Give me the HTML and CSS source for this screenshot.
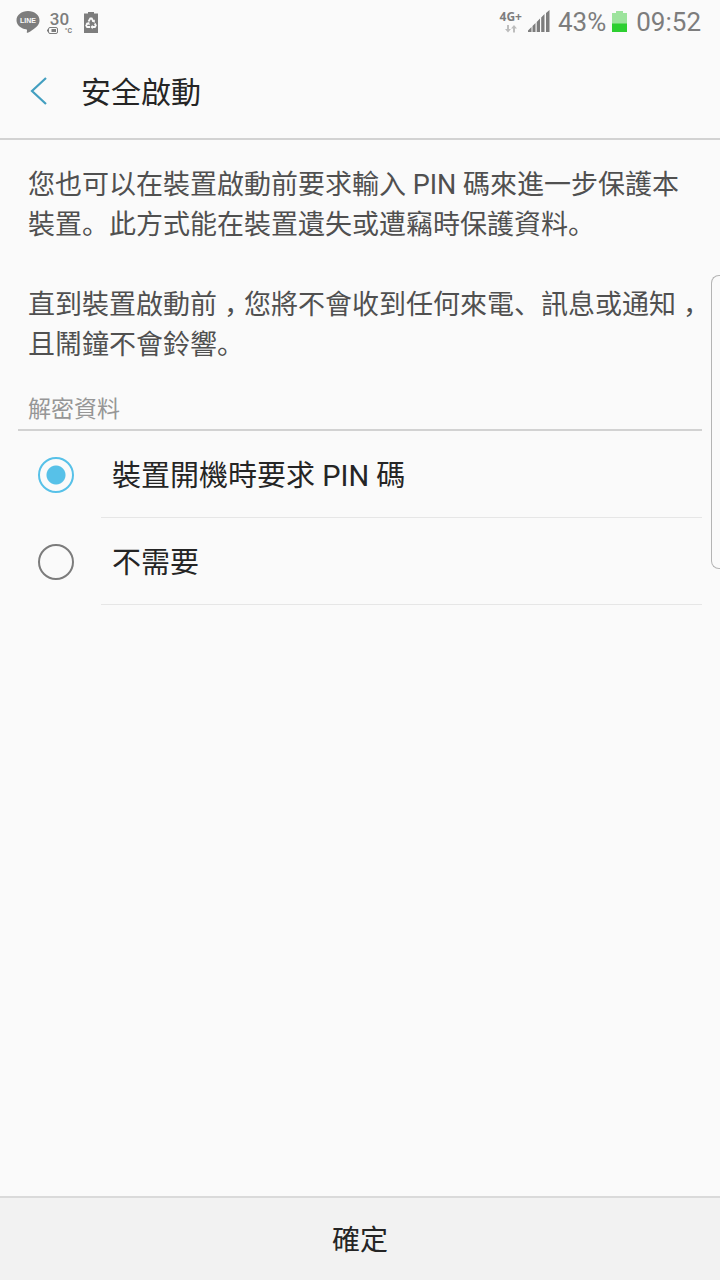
FILE: index.html
```
<!DOCTYPE html>
<html lang="zh-Hans">
<head>
    <meta charset="UTF-8">
    <meta name="viewport" content="width=device-width, initial-scale=1.0">
    <title>安全啟動</title>
    <link rel="stylesheet" href="styles.css">
</head>
<body>
    <div class="status-bar">
        <div class="status-left">
            <svg class="icon-line" width="24" height="24" viewBox="0 0 24 24">
                <path fill="#7d7d7d" d="M12 1C5.600 1 .5 5.100.5 10.200c0 4.600 4.100 8.400 9.600 9.100.8.200 1 .5.900 1.200l-.2 1.800c0 .5.300.7.900.4 3.200-1.500 7.900-4.800 10-7.300 1.300-1.500 1.800-3.200 1.800-5.200C23.500 5.100 18.400 1 12 1z"/>
                <text x="12" y="13" text-anchor="middle" class="line-text">LINE</text>
            </svg>
            <div class="temp">
                <span class="temp-value">30</span>
                <span class="temp-unit">
                    <svg width="11" height="7" viewBox="0 0 11 7">
                        <rect x="1.500" y=".5" width="9" height="6" rx="1.500" fill="none" stroke="#7d7d7d"/>
                        <path d="M0 2.500h1v2H0zM4.500 2h4.500v3H4.500z" fill="#7d7d7d"/>
                    </svg>
                    <span>°C</span>
                </span>
            </div>
            <svg class="icon-recycle" width="14" height="21" viewBox="0 0 14 21">
                <path fill="#7d7d7d" d="M4 0h6v1.500h4V21H0V1.500h4z"/>
                <g fill="none" stroke="#fafafa" stroke-width="1.800">
                    <path d="M4.500 9.500l1.800-3h1.400l1.600 2.700"/>
                    <path d="M10.800 11.500l1 2-.9 1.500H8"/>
                    <path d="M6 15H3.100l-.9-1.500 1.500-2.500"/>
                </g>
                <path fill="#fafafa" d="M10.800 7.500v3.200l-3-1.200zM8.600 12.800v4.400L6.500 15zM1.600 11.200l3.600-1.200.6 3.200z"/>
            </svg>
        </div>
        <div class="status-right">
            <div class="network">
                <span>4G+</span>
                <svg width="12" height="8" viewBox="0 0 12 8">
                    <path fill="#bdbdbd" d="M2 0h2v4h2L3 7.500 0 4h2zM8 7.500h2v-4h2L9 0 6 3.500h2z"/>
                </svg>
            </div>
            <svg class="icon-signal" width="22" height="22" viewBox="0 0 22 22">
                <path fill="#7d7d7d" d="M0 22v-1.500L3.500 17v5zM4.500 22v-6L7.500 13v9zM8.700 22V12L12 8.500V22zM13.200 22V7.500L16.500 4v18zM18 22V3l3.500-3v22z"/>
            </svg>
            <span class="percent">43%</span>
            <svg class="icon-battery" width="15" height="21" viewBox="0 0 15 21">
                <path fill="#9de39d" d="M4 0h7v2h4v19H0V2h4z"/>
                <path fill="#2dcf31" d="M0 12.500h15V21H0z"/>
            </svg>
            <span class="clock">09:52</span>
        </div>
    </div>

    <header>
        <button type="button" class="back-btn" aria-label="返回">
            <svg width="18" height="28" viewBox="0 0 18 28">
                <path d="M16 1L2 14l14 13" fill="none" stroke="#439fc0" stroke-width="2.200"/>
            </svg>
        </button>
        <h1>安全啟動</h1>
    </header>

    <main>
        <div class="description">
            <p>您也可以在裝置啟動前要求輸入 PIN 碼來進一步保護本<br>裝置。此方式能在裝置遺失或遭竊時保護資料。</p>
            <p>直到裝置啟動前<span class="comma">，</span>您將不會收到任何來電、訊息或通知<span class="comma">，</span><br>且鬧鐘不會鈴響。</p>
        </div>

        <form id="pinForm" class="options">
            <h2>解密資料</h2>
            <div class="option">
                <input type="radio" id="requirePin" name="startup" checked>
                <label for="requirePin">裝置開機時要求 PIN 碼</label>
            </div>
            <div class="option">
                <input type="radio" id="noPin" name="startup">
                <label for="noPin">不需要</label>
            </div>
        </form>
    </main>

    <div class="edge-handle"></div>

    <button type="submit" form="pinForm" class="confirm-btn">確定</button>
</body>
</html>
```
FILE: styles.css
```
:root {
    --bg: #fafafa;
    --ink: #252525;
    --text: #505050;
    --muted: #969696;
    --status: #7d7d7d;
    --accent: #57c1e8;
    --line: #d2d2d2;
}

* {
    box-sizing: border-box;
}

body {
    display: flex;
    flex-direction: column;
    min-height: 100vh;
    margin: 0;
    position: relative;
    overflow-x: hidden;
    background-color: var(--bg);
    color: var(--ink);
    font-family: Roboto, "Noto Sans CJK SC", sans-serif;
}

h1, h2, p {
    margin: 0;
    font-weight: normal;
}

button {
    border: none;
    color: inherit;
    font-family: inherit;
    cursor: pointer;
}

/* Status bar */
.status-bar {
    display: flex;
    justify-content: space-between;
    align-items: center;
    height: 44px;
    padding: 0 19px 0 16px;
    color: var(--status);
}

.status-left,
.status-right {
    display: flex;
    align-items: center;
}

.status-left {
    gap: 7px;
}

.line-text {
    fill: #fafafa;
    font: bold 7px "Liberation Sans", sans-serif;
}

.temp {
    display: flex;
    flex-direction: column;
    align-items: center;
    width: 25px;
    padding-top: 2px;
}

.temp-value {
    font-size: 17px;
    font-weight: 500;
    line-height: 15px;
}

.temp-unit {
    display: flex;
    align-items: center;
    justify-content: space-between;
    width: 25px;
    font-size: 7px;
    font-weight: bold;
    line-height: 8px;
}

.icon-recycle {
    margin-left: 5px;
}

.network {
    display: flex;
    flex-direction: column;
    align-items: center;
    gap: 2px;
    margin-right: 6px;
    font-family: "Open Sans", sans-serif;
    font-size: 12px;
    font-weight: bold;
    line-height: 12px;
}

.icon-signal,
.icon-battery {
    margin-bottom: 2px;
}

.percent,
.clock {
    font-size: 26px;
}

.percent {
    margin: 0 6px 0 8px;
}

.clock {
    margin-left: 9px;
}

/* Title */
header {
    display: flex;
    align-items: center;
    height: 96px;
    padding: 0 28px;
    border-bottom: 2px solid var(--line);
}

.back-btn {
    display: flex;
    width: 53px;
    padding: 0 2px;
    background: none;
}

h1 {
    padding-top: 3px;
    font-size: 30px;
    line-height: 40px;
}

/* Content */
main {
    flex: 1;
}

.description {
    display: flex;
    flex-direction: column;
    gap: 40px;
    padding: 25px 0 24px 28px;
    color: var(--text);
    font-size: 27px;
    line-height: 40px;
    white-space: nowrap;
}

/* full-width comma sits in the middle of its cell */
.comma {
    padding-left: 7px;
    margin-right: -7px;
}

.options {
    padding: 0 18px;
}

h2 {
    padding: 3px 10px 1px;
    border-bottom: 2px solid var(--line);
    color: var(--muted);
    font-size: 23px;
    line-height: 36px;
}

.option {
    display: flex;
    align-items: center;
    height: 87px;
    padding-left: 20px;
}

.option input {
    appearance: none;
    flex: none;
    width: 36px;
    height: 36px;
    margin: 0 27px 0 0;
    border: 2px solid #7c7c7c;
    border-radius: 50%;
}

.option input:checked {
    border-color: var(--accent);
    background: radial-gradient(circle, var(--accent) 9px, transparent 10px);
}

.option label {
    flex: 1;
    height: 87px;
    padding: 4px 0 0 11px;
    border-bottom: 1px solid #e6e6e6;
    font-size: 29px;
    line-height: 83px;
}

/* Edge panel handle, overlaps the right side of the screen */
.edge-handle {
    position: absolute;
    top: 275px;
    right: -2px;
    width: 11px;
    height: 294px;
    border: 1px solid #b4b4b4;
    border-right: none;
    border-radius: 8px 0 0 8px;
}

.confirm-btn {
    height: 84px;
    padding-bottom: 3px;
    border-top: 2px solid #dadada;
    background-color: #f2f2f2;
    font-size: 28px;
}
```
